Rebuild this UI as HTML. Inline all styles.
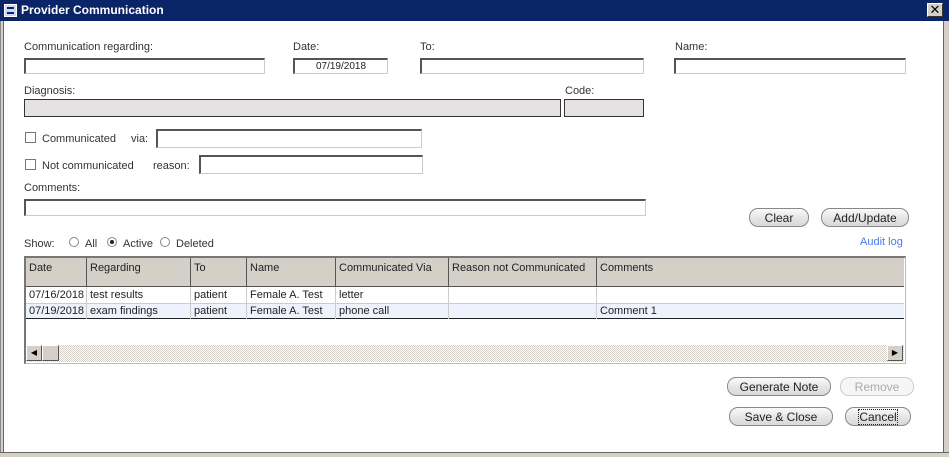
<!DOCTYPE html>
<html><head><style>
*{margin:0;padding:0;box-sizing:border-box}
body{width:949px;height:457px;background:#fff;position:relative;overflow:hidden;font-family:"Liberation Sans","DejaVu Sans",sans-serif;font-size:11px;color:#222}
.a{position:absolute}
.lbl{position:absolute;font-size:11px;color:#333;white-space:nowrap;margin-top:1px}
.in{position:absolute;background:#fff;border:1px solid #ccc;border-top:2px solid #555;border-left:2px solid #555}
.gr{position:absolute;background:#e6e2e4;border:1px solid #333}
.btn{position:absolute;border:1px solid #888;border-radius:9px;background:linear-gradient(#fafafa,#e6e6e6 50%,#d8d8d8);font-size:12px;color:#222;text-align:center;line-height:18px}
.cb{position:absolute;width:11px;height:11px;border:1px solid #777;background:#fff}
.rd{position:absolute;width:10px;height:10px;border:1px solid #888;border-radius:50%;background:#fff}
.th{position:absolute;top:258px;height:29px;background:#d4d0c8;border-right:1px solid #555;border-bottom:1px solid #555;padding:4px 3px;white-space:nowrap}
.td{position:absolute;height:16px;border-right:1px solid #ccc;padding:2px 3px 0;white-space:nowrap}
</style></head><body>
<div class="a" style="left:0;top:0;width:949px;height:21px;background:#0a2468"></div>
<div class="a" style="left:4px;top:4px;width:13px;height:13px;background:#cfd8f0;border:1px solid #fff"><div style="margin:2px;height:7px;border-top:2px solid #0a2468;border-bottom:2px solid #0a2468"></div></div>
<div class="a" style="left:21px;top:3px;color:#fff;font-weight:bold;font-size:12px">Provider Communication</div>
<div class="a" style="left:927px;top:3px;width:16px;height:14px;background:#d4d0c8;border:1px solid #fff;border-right-color:#333;border-bottom-color:#333;font-size:13px;line-height:12px;text-align:center;font-weight:bold;color:#000">✕</div>
<div class="a" style="left:0;top:21px;width:4px;height:436px;background:#d4d0c8;border-left:1px solid #888;border-right:1px solid #666"></div>
<div class="a" style="left:943px;top:21px;width:6px;height:436px;background:#d4d0c8;border-left:1px solid #666"></div>
<div class="a" style="left:0;top:452px;width:949px;height:5px;background:#d4d0c8;border-top:1px solid #666"></div>

<div class="lbl" style="left:24px;top:40px">Communication regarding:</div>
<div class="in" style="left:24px;top:58px;width:241px;height:16px"></div>
<div class="lbl" style="left:293px;top:40px">Date:</div>
<div class="in" style="left:293px;top:58px;width:95px;height:16px;text-align:center;font-size:10px;line-height:14px">07/19/2018</div>
<div class="lbl" style="left:420px;top:40px">To:</div>
<div class="in" style="left:420px;top:58px;width:224px;height:16px"></div>
<div class="lbl" style="left:675px;top:40px">Name:</div>
<div class="in" style="left:674px;top:58px;width:232px;height:16px"></div>

<div class="lbl" style="left:24px;top:84px">Diagnosis:</div>
<div class="gr" style="left:24px;top:99px;width:537px;height:18px"></div>
<div class="lbl" style="left:565px;top:84px">Code:</div>
<div class="gr" style="left:564px;top:99px;width:80px;height:18px"></div>

<div class="cb" style="left:25px;top:132px"></div>
<div class="lbl" style="left:42px;top:132px">Communicated</div>
<div class="lbl" style="left:131px;top:132px">via:</div>
<div class="in" style="left:156px;top:129px;width:266px;height:19px"></div>
<div class="cb" style="left:25px;top:159px"></div>
<div class="lbl" style="left:42px;top:159px">Not communicated</div>
<div class="lbl" style="left:153px;top:159px">reason:</div>
<div class="in" style="left:199px;top:155px;width:224px;height:19px"></div>
<div class="lbl" style="left:24px;top:181px">Comments:</div>
<div class="in" style="left:24px;top:199px;width:622px;height:17px"></div>

<div class="btn" style="left:749px;top:208px;width:60px;height:19px">Clear</div>
<div class="btn" style="left:821px;top:208px;width:88px;height:19px">Add/Update</div>

<div class="lbl" style="left:24px;top:237px">Show:</div>
<div class="rd" style="left:69px;top:237px"></div><div class="lbl" style="left:85px;top:237px">All</div>
<div class="rd" style="left:107px;top:237px"><div style="margin:2px;width:4px;height:4px;background:#222;border-radius:50%"></div></div><div class="lbl" style="left:123px;top:237px">Active</div>
<div class="rd" style="left:160px;top:237px"></div><div class="lbl" style="left:176px;top:237px">Deleted</div>
<div class="lbl" style="left:860px;top:235px;color:#4a7be5">Audit log</div>

<div class="a" style="left:24px;top:256px;width:882px;height:108px;border:1px solid #bbb;border-top:2px solid #777;border-left:2px solid #777;background:#fff"></div>
<div class="th" style="left:26px;width:61px">Date</div>
<div class="th" style="left:87px;width:104px">Regarding</div>
<div class="th" style="left:191px;width:56px">To</div>
<div class="th" style="left:247px;width:89px">Name</div>
<div class="th" style="left:336px;width:113px">Communicated Via</div>
<div class="th" style="left:449px;width:148px">Reason not Communicated</div>
<div class="th" style="left:597px;width:307px;border-right:none">Comments</div>
<div class="a" style="left:26px;top:303px;width:878px;height:16px;background:#eef2fc;border-bottom:1px solid #222;border-top:1px solid #ccc"></div>
<div class="td" style="left:26px;top:287px;width:61px">07/16/2018</div>
<div class="td" style="left:87px;top:287px;width:104px">test results</div>
<div class="td" style="left:191px;top:287px;width:56px">patient</div>
<div class="td" style="left:247px;top:287px;width:89px">Female A. Test</div>
<div class="td" style="left:336px;top:287px;width:113px">letter</div>
<div class="td" style="left:449px;top:287px;width:148px"></div>
<div class="td" style="left:26px;top:303px;width:61px">07/19/2018</div>
<div class="td" style="left:87px;top:303px;width:104px">exam findings</div>
<div class="td" style="left:191px;top:303px;width:56px">patient</div>
<div class="td" style="left:247px;top:303px;width:89px">Female A. Test</div>
<div class="td" style="left:336px;top:303px;width:113px">phone call</div>
<div class="td" style="left:449px;top:303px;width:148px"></div>
<div class="td" style="left:597px;top:303px;width:200px;border:none">Comment 1</div>
<div class="a" style="left:26px;top:345px;width:878px;height:17px;background:repeating-conic-gradient(#d4d0c8 0 25%,#fff 0 50%) 0 0/2px 2px"></div>
<div class="a" style="left:26px;top:345px;width:16px;height:16px;background:#d4d0c8;border:1px solid #fff;border-right-color:#555;border-bottom-color:#555;font-size:8px;line-height:14px;text-align:center;color:#000">◀</div>
<div class="a" style="left:42px;top:345px;width:17px;height:16px;background:#d4d0c8;border:1px solid #fff;border-right-color:#555;border-bottom-color:#555"></div>
<div class="a" style="left:887px;top:345px;width:16px;height:16px;background:#d4d0c8;border:1px solid #fff;border-right-color:#555;border-bottom-color:#555;font-size:8px;line-height:14px;text-align:center;color:#000">▶</div>

<div class="btn" style="left:727px;top:377px;width:104px;height:19px">Generate Note</div>
<div class="btn" style="left:840px;top:377px;width:74px;height:19px;color:#aaa;border-color:#ccc;background:#f6f6f6">Remove</div>
<div class="btn" style="left:729px;top:407px;width:104px;height:19px">Save &amp; Close</div>
<div class="btn" style="left:845px;top:407px;width:66px;height:19px"><span style="outline:1px dotted #222">Cancel</span></div>
</body></html>
